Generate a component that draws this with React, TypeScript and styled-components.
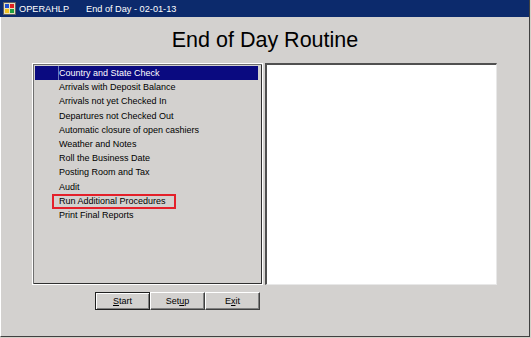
import React from 'react'
import styled, { createGlobalStyle } from 'styled-components'

const GlobalStyle = createGlobalStyle`
  html, body {
    margin: 0;
    padding: 0;
    background: #d4d0c8;
  }
  body {
    font-family: "Liberation Sans", Arial, sans-serif;
  }
`

const Window = styled.div`
  width: 530px;
  height: 337px;
  box-sizing: border-box;
  background: #d3d1cf;
  border-left: 1px solid #ffffff;
  border-right: 1px solid #404040;
  border-bottom: 1px solid #404040;
  display: flex;
  flex-direction: column;
`

const TitleBar = styled.div`
  height: 17px;
  margin-left: -1px;
  background: #0c2a6c;
  color: #ffffff;
  display: flex;
  align-items: center;
  font-size: 9.2px;
  padding-left: 3px;
`

const AppName = styled.span`
  margin-left: 3px;
  width: 67px;
`

const Heading = styled.h1`
  margin: 12px 0 12px;
  font-size: 21.5px;
  line-height: 22px;
  font-weight: normal;
  text-align: center;
  color: #000000;
`

const Body = styled.div`
  display: flex;
  gap: 2px;
  padding-left: 31px;
`

const ListBox = styled.div`
  width: 231px;
  height: 222px;
  box-sizing: border-box;
  border: 1px solid #ffffff;
  box-shadow: inset 1px 1px 0 #707070, inset -1px -1px 0 #303030;
  padding: 2px 4px 2px 2px;
`

const Row = styled.div<{ $selected?: boolean }>`
  display: grid;
  grid-template-columns: 23px 1fr;
  height: 14.2px;
  line-height: 14.2px;
  font-size: 9px;
  background: ${(p) => (p.$selected ? '#0a0a80' : 'transparent')};
  color: ${(p) => (p.$selected ? '#ffffff' : '#000000')};
  white-space: nowrap;
`

const Cell = styled.div<{ $selected?: boolean }>`
  border-left: 1px solid ${(p) => (p.$selected ? '#6a78b8' : 'transparent')};
`

const Label = styled.span<{ $marked?: boolean }>`
  display: inline-block;
  box-sizing: border-box;
  ${(p) =>
    p.$marked
      ? `
    border: 2px solid #e4202a;
    margin-left: -7px;
    padding: 0 8px 0 5px;
    height: 15px;
    line-height: 11px;
  `
      : ''}
`

const Preview = styled.div`
  width: 232px;
  height: 222px;
  box-sizing: border-box;
  background: #ffffff;
  border-top: 2px solid #505050;
  border-left: 2px solid #505050;
  border-right: 1px solid #e8e8e8;
  border-bottom: 1px solid #e8e8e8;
`

const Buttons = styled.div`
  display: flex;
  padding-left: 94px;
  margin-top: 7px;
`

const Button = styled.button<{ $default?: boolean }>`
  width: 55px;
  height: 18px;
  box-sizing: border-box;
  padding: 0;
  font-family: "Liberation Sans", Arial, sans-serif;
  font-size: 9px;
  color: #000000;
  background: #d3d1cf;
  border: 1px solid;
  border-color: ${(p) =>
    p.$default ? '#202020' : '#ffffff #404040 #404040 #ffffff'};
  box-shadow: ${(p) =>
    p.$default
      ? 'inset 1px 1px 0 #ffffff, inset -1px -1px 0 #808080'
      : 'inset -1px -1px 0 #808080'};
`

const Icon = () => (
  <svg width="13" height="13" viewBox="0 0 13 13">
    <rect x="0.5" y="0.5" width="12" height="12" fill="#e8e0c0" stroke="#606060" />
    <rect x="2" y="2" width="4" height="4" fill="#2050d0" />
    <rect x="7" y="2" width="4" height="4" fill="#e02020" />
    <rect x="2" y="7" width="4" height="4" fill="#f0c020" />
    <rect x="7" y="7" width="4" height="4" fill="#20a040" />
  </svg>
)

const steps = [
  'Country and State Check',
  'Arrivals with Deposit Balance',
  'Arrivals not yet Checked In',
  'Departures not Checked Out',
  'Automatic closure of open cashiers',
  'Weather and Notes',
  'Roll the Business Date',
  'Posting Room and Tax',
  'Audit',
  'Run Additional Procedures',
  'Print Final Reports',
]

export default function App() {
  return (
    <>
      <GlobalStyle />
      <Window>
        <TitleBar>
          <Icon />
          <AppName>OPERAHLP</AppName>
          <span>End of Day - 02-01-13</span>
        </TitleBar>
        <Heading>End of Day Routine</Heading>
        <Body>
          <ListBox>
            {steps.map((s, i) => (
              <Row key={s} $selected={i === 0}>
                <div />
                <Cell $selected={i === 0}>
                  <Label $marked={s === 'Run Additional Procedures'}>{s}</Label>
                </Cell>
              </Row>
            ))}
          </ListBox>
          <Preview />
        </Body>
        <Buttons>
          <Button $default>
            <u>S</u>tart
          </Button>
          <Button>
            Set<u>u</u>p
          </Button>
          <Button>
            E<u>x</u>it
          </Button>
        </Buttons>
      </Window>
    </>
  )
}
